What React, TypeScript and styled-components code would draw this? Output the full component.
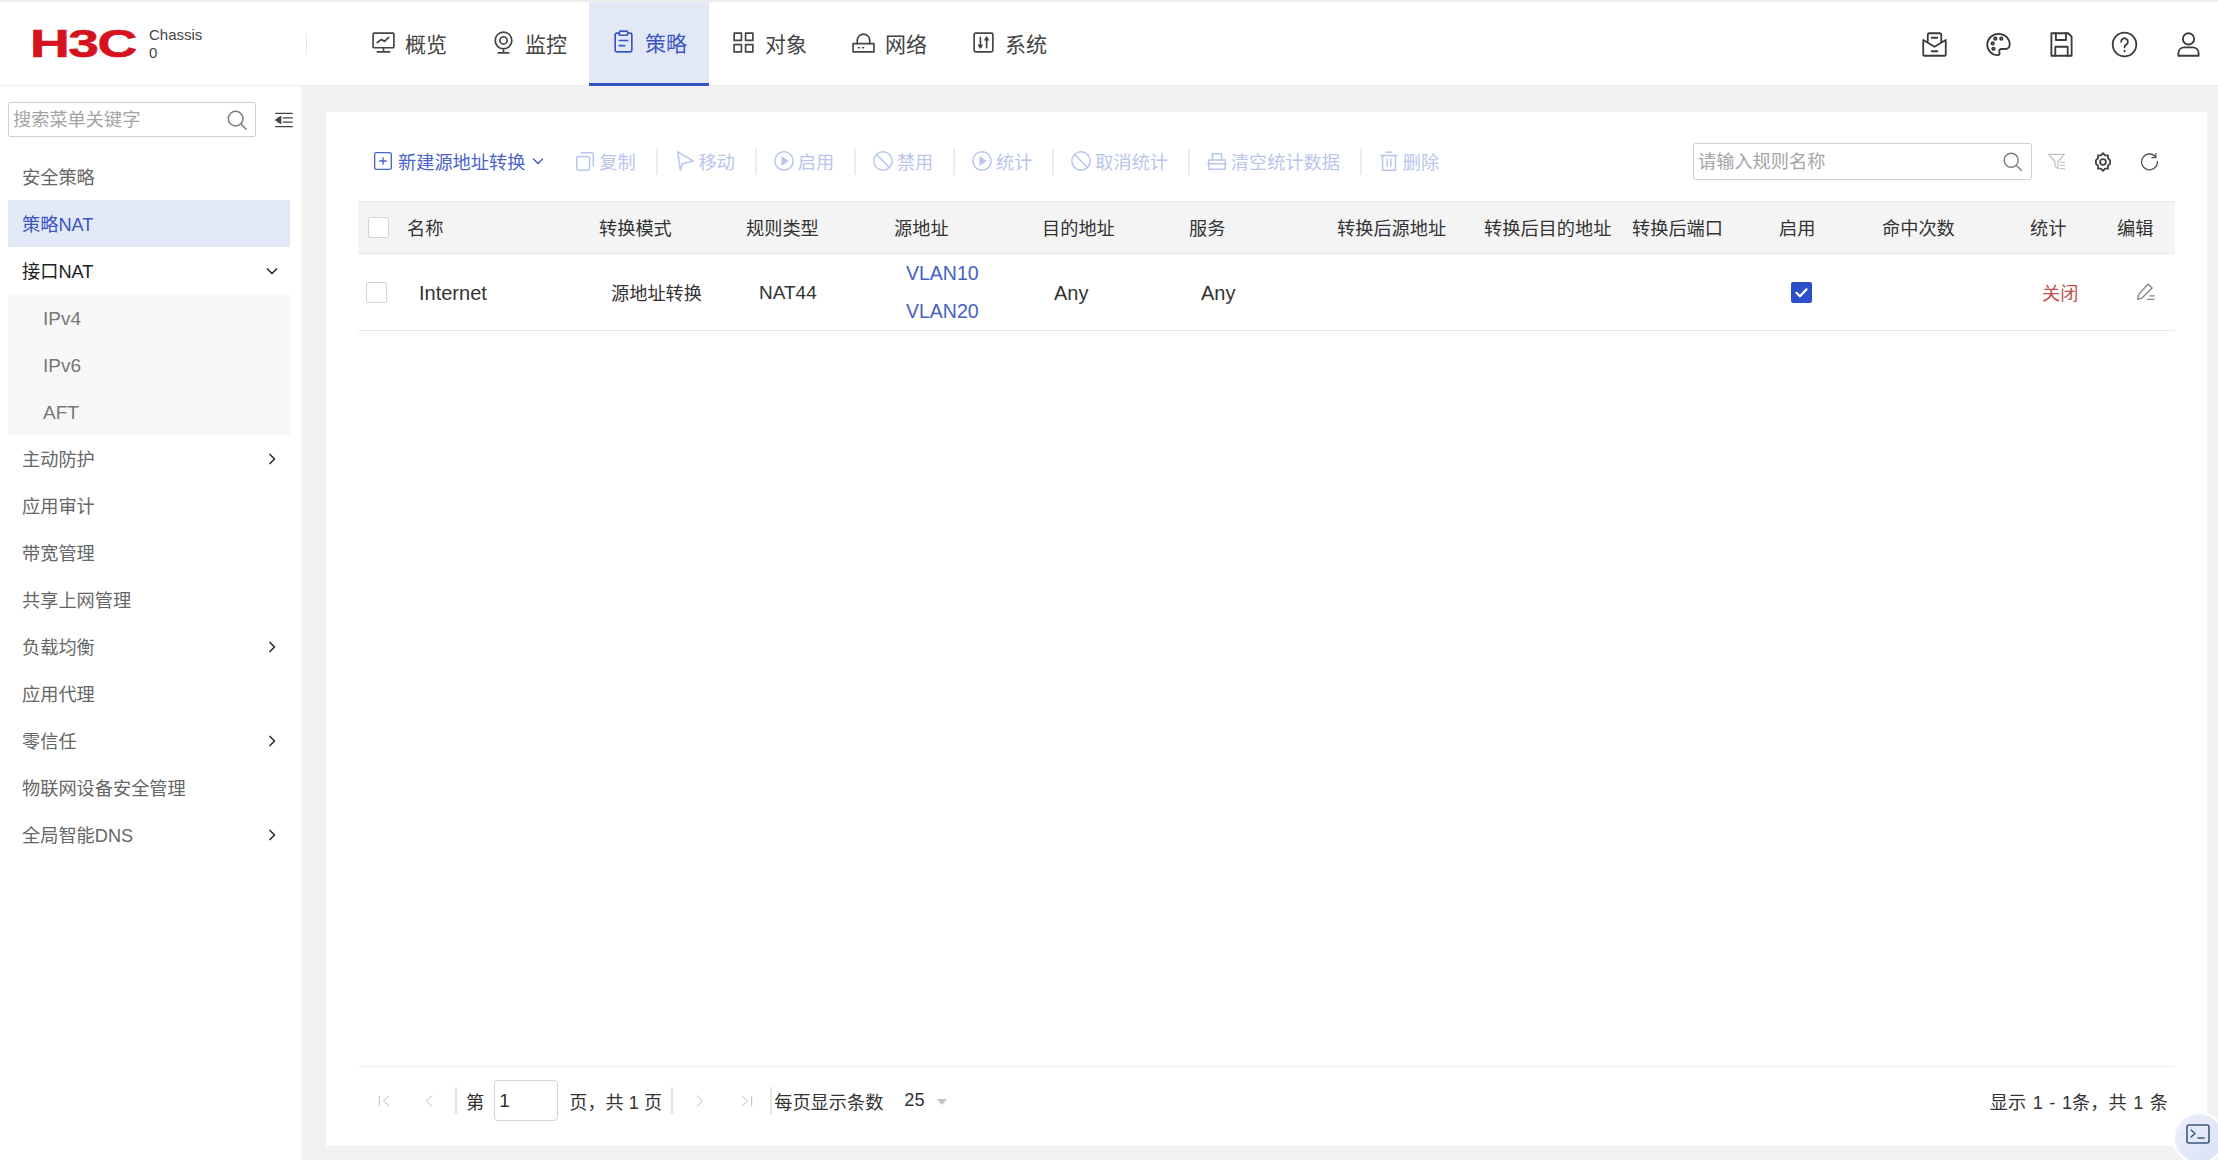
import type { ReactNode } from 'react';
import styled, { createGlobalStyle } from 'styled-components';

const FONT = '"Liberation Sans", "Noto Sans CJK SC", sans-serif';
const COLUMNS = '37px 192px 147px 148px 148px 147px 148px 147px 148px 147px 103px 148px 87px 70px';

const GlobalStyle = createGlobalStyle`
  html, body {
    margin: 0;
    padding: 0;
    background: #f2f2f2;
  }
  * {
    box-sizing: border-box;
  }
`;

function Icon({ size = 20, children }: { size?: number; children: ReactNode }) {
  return (
    <Glyph $size={size} viewBox="0 0 24 24">
      {children}
    </Glyph>
  );
}

const navItems = [
  {
    label: '概览',
    icon: (
      <>
        <rect x="2" y="3" width="20" height="14" rx="1" />
        <path d="M12 17v4M6 21h12M6 12l4-3 3 2 4-4" />
      </>
    ),
  },
  {
    label: '监控',
    icon: (
      <>
        <circle cx="12" cy="10" r="8" />
        <circle cx="12" cy="10" r="3.5" />
        <path d="M12 18v3M7 22h10" />
      </>
    ),
  },
  {
    label: '策略',
    icon: (
      <>
        <path d="M8 4H5.5A1.5 1.5 0 0 0 4 5.5v15A1.5 1.5 0 0 0 5.5 22h13a1.5 1.5 0 0 0 1.500-1.500v-15A1.500 1.500 0 0 0 18.500 4H16" />
        <rect x="8" y="2" width="8" height="4" rx="1" />
        <path d="M8 11h8M8 16h5" />
      </>
    ),
  },
  {
    label: '对象',
    icon: (
      <>
        <rect x="3" y="3" width="7" height="7" />
        <rect x="14" y="3" width="7" height="7" />
        <rect x="3" y="14" width="7" height="7" />
        <rect x="14" y="14" width="7" height="7" />
      </>
    ),
  },
  {
    label: '网络',
    icon: (
      <>
        <path d="M2 13h20v8H2z" />
        <path d="M6 13v-3a6 6 0 0 1 12 0v3" />
        <path d="M7 17h1M11 17h1" />
      </>
    ),
  },
  {
    label: '系统',
    icon: (
      <>
        <rect x="3" y="3" width="18" height="18" rx="1.500" />
        <path d="M9 7v10M15 7v10M7.500 14.500 9 17l1.500-2.500M13.500 9.500 15 7l1.500 2.500" />
      </>
    ),
  },
];

const headerActions = [
  <>
    <path d="M6 9V3.500A1.500 1.500 0 0 1 7.500 2h9A1.500 1.500 0 0 1 18 3.500V9" />
    <path d="M2 8v13a1 1 0 0 0 1 1h18a1 1 0 0 0 1-1V8l-10 6z" />
    <path d="M9.500 6h5M9.500 18h5" />
  </>,
  <>
    <path d="M12 2.500C6.500 2.500 2 6.800 2 12.200c0 5.200 4.300 9.300 9 9.300 2 0 2.300-1.300 1.800-2.500-.6-1.500.2-3 2-3h2.700c2.700 0 4.500-1.700 4.500-4 0-5.400-4.500-9.500-10-9.500z" />
    <circle cx="6.800" cy="11" r="1.100" />
    <circle cx="9.200" cy="6.800" r="1.100" />
    <circle cx="14.500" cy="6.800" r="1.100" />
    <circle cx="7.500" cy="15.800" r="1.100" />
  </>,
  <>
    <path d="M3 2h15l3 3v17H3z" />
    <path d="M7 2v6h9V2M6.500 22v-8h11v8" />
  </>,
  <>
    <circle cx="12" cy="12" r="10.500" />
    <path d="M9 9.500a3 3 0 1 1 4.500 2.600c-1 .6-1.500 1.200-1.500 2.400M12 17.500v.6" />
  </>,
  <>
    <circle cx="12" cy="7" r="5" />
    <path d="M3 22v-2.500c0-3 2.500-5 5.500-5h7c3 0 5.500 2 5.500 5V22z" />
  </>,
];

const sideMenu: { label: string; arrow?: 'right' | 'down'; strong?: boolean; active?: boolean; children?: string[] }[] = [
  { label: '安全策略' },
  { label: '策略NAT', active: true },
  { label: '接口NAT', arrow: 'down', strong: true, children: ['IPv4', 'IPv6', 'AFT'] },
  { label: '主动防护', arrow: 'right' },
  { label: '应用审计' },
  { label: '带宽管理' },
  { label: '共享上网管理' },
  { label: '负载均衡', arrow: 'right' },
  { label: '应用代理' },
  { label: '零信任', arrow: 'right' },
  { label: '物联网设备安全管理' },
  { label: '全局智能DNS', arrow: 'right' },
];

const playIcon = (
  <>
    <circle cx="12" cy="12" r="10" />
    <path d="M10 8l6 4-6 4z" fill="currentColor" />
  </>
);
const banIcon = (
  <>
    <circle cx="12" cy="12" r="10" />
    <path d="M5 5l14 14" />
  </>
);

const toolItems = [
  {
    label: '复制',
    icon: (
      <>
        <rect x="3" y="7" width="14" height="15" rx="2" />
        <path d="M8 3h11a2 2 0 0 1 2 2v12" />
      </>
    ),
  },
  { label: '移动', icon: <path d="M4 2l17 10L9 15l-2 7z" /> },
  { label: '启用', icon: playIcon },
  { label: '禁用', icon: banIcon },
  { label: '统计', icon: playIcon },
  { label: '取消统计', icon: banIcon },
  {
    label: '清空统计数据',
    icon: (
      <>
        <path d="M3 11h18v10H3zM2 15h20" />
        <path d="M7 11V4h10v7" />
      </>
    ),
  },
  {
    label: '删除',
    icon: (
      <>
        <path d="M5 6v16h14V6M3 6h18M9 2.500h6" />
        <path d="M10 10v8M14 10v8" />
      </>
    ),
  },
];

const headers = ['名称', '转换模式', '规则类型', '源地址', '目的地址', '服务', '转换后源地址', '转换后目的地址', '转换后端口', '启用', '命中次数', '统计', '编辑'];

export default function App() {
  return (
    <Page>
      <GlobalStyle />
      <TopBar>
        <Brand>
          <LogoBox>
            <LogoText>H3C</LogoText>
          </LogoBox>
          <Device>
            <span>Chassis</span>
            <span>0</span>
          </Device>
        </Brand>
        <Nav>
          {navItems.map((item) => (
            <NavItem key={item.label} $active={item.label === '策略'}>
              <Icon size={25}>{item.icon}</Icon>
              <NavLabel>{item.label}</NavLabel>
            </NavItem>
          ))}
        </Nav>
        <Actions>
          {headerActions.map((icon, i) => (
            <ActionButton key={i}>
              <Icon size={27}>{icon}</Icon>
            </ActionButton>
          ))}
        </Actions>
      </TopBar>

      <Body>
        <Sidebar>
          <SideSearchRow>
            <SideSearch>
              <SearchInput placeholder="搜索菜单关键字" />
              <SearchGlyph>
                <Icon size={22}>
                  <circle cx="10.500" cy="10.500" r="8" />
                  <path d="M16.500 16.500 22 22" />
                </Icon>
              </SearchGlyph>
            </SideSearch>
            <CollapseButton>
              <Icon size={20}>
                <path d="M2 4h20M11 9.500h11M11 14.500h11M2 20h20" />
                <path d="M8 8v8l-6-4z" fill="currentColor" />
              </Icon>
            </CollapseButton>
          </SideSearchRow>
          <Menu>
            {sideMenu.map((entry) => (
              <div key={entry.label}>
                <MenuRow $active={entry.active} $strong={entry.strong}>
                  {entry.label}
                  {entry.arrow && (
                    <MenuArrow>
                      <Icon size={12}>
                        <path d={entry.arrow === 'down' ? 'M3 8l9 9 9-9' : 'M8 3l9 9-9 9'} />
                      </Icon>
                    </MenuArrow>
                  )}
                </MenuRow>
                {entry.children && (
                  <SubMenu>
                    {entry.children.map((child) => (
                      <SubRow key={child}>{child}</SubRow>
                    ))}
                  </SubMenu>
                )}
              </div>
            ))}
          </Menu>
        </Sidebar>

        <Main>
          <Card>
            <Toolbar>
              <NewButton>
                <Icon size={20}>
                  <rect x="2" y="2" width="20" height="20" rx="2" />
                  <path d="M12 8v8M8 12h8" />
                </Icon>
                新建源地址转换
                <Icon size={12}>
                  <path d="M3 8l9 9 9-9" />
                </Icon>
              </NewButton>
              {toolItems.map((tool, i) => (
                <ToolGroup key={tool.label}>
                  <ToolButton>
                    <Icon size={22}>{tool.icon}</Icon>
                    {tool.label}
                  </ToolButton>
                  {i < toolItems.length - 1 && <ToolSep />}
                </ToolGroup>
              ))}
              <RuleSearch>
                <RuleInput placeholder="请输入规则名称" />
                <SearchGlyph>
                  <Icon size={21}>
                    <circle cx="10.500" cy="10.500" r="8" />
                    <path d="M16.500 16.500 22 22" />
                  </Icon>
                </SearchGlyph>
              </RuleSearch>
              <TableTools>
                <FilterTool>
                  <Icon size={19}>
                    <path d="M2 3h20l-8 9v9l-4-3v-6z" />
                    <path d="M17 13h5M17 17h5M17 21h5" />
                  </Icon>
                </FilterTool>
                <GearTool>
                  <Icon size={20}>
                    <path d="M12 1.500l2.500 2.500h3.500v3.500l2.500 2.500v4l-2.500 2.500V20h-3.500L12 22.500 9.500 20H6v-3.500L3.500 14v-4L6 7.500V4h3.500z" />
                    <circle cx="12" cy="12" r="3.500" />
                  </Icon>
                </GearTool>
                <Icon size={19}>
                  <path d="M20 6.500A10 10 0 1 0 22 12" />
                  <path d="M20 2v5h-5" />
                </Icon>
              </TableTools>
            </Toolbar>

            <TableArea>
              <HeaderRow>
                <CheckCell>
                  <CheckBox />
                </CheckCell>
                {headers.map((title) => (
                  <HeaderCell key={title}>{title}</HeaderCell>
                ))}
              </HeaderRow>
              <DataRow>
                <CheckCell $shift={-2}>
                  <CheckBox />
                </CheckCell>
                <NameCell>Internet</NameCell>
                <DataCell>源地址转换</DataCell>
                <LatinCell>NAT44</LatinCell>
                <LinkCell>
                  <span>VLAN10</span>
                  <span>VLAN20</span>
                </LinkCell>
                <AnyCell>Any</AnyCell>
                <AnyCell>Any</AnyCell>
                <DataCell />
                <DataCell />
                <DataCell />
                <DataCell>
                  <CheckedBox>
                    <Icon size={15}>
                      <path d="M4 12.500l5.500 5.500L20 7" />
                    </Icon>
                  </CheckedBox>
                </DataCell>
                <DataCell />
                <OffCell>关闭</OffCell>
                <EditCell>
                  <Icon size={21}>
                    <path d="M3 21l1.500-6L15 3.500l4.500 4.500L8 19.500z" />
                    <path d="M14 21h8M17 17h5" />
                  </Icon>
                </EditCell>
              </DataRow>
            </TableArea>

            <Pager>
              <PagerIcon $gap={31}>
                <Icon size={14}>
                  <path d="M4 4v16M20 4l-9 8 9 8" />
                </Icon>
              </PagerIcon>
              <PagerIcon $gap={19}>
                <Icon size={14}>
                  <path d="M17 3l-9 9 9 9" />
                </Icon>
              </PagerIcon>
              <PagerSep />
              <PagerText>第</PagerText>
              <PageInput defaultValue="1" />
              <PagerText>页，共 1 页</PagerText>
              <PagerSep />
              <PagerIcon $gap={33} $lead={20}>
                <Icon size={14}>
                  <path d="M7 3l9 9-9 9" />
                </Icon>
              </PagerIcon>
              <PagerIcon $gap={16}>
                <Icon size={14}>
                  <path d="M20 4v16M4 4l9 8-9 8" />
                </Icon>
              </PagerIcon>
              <PagerSep />
              <SizeLabel>每页显示条数</SizeLabel>
              <SizeValue>25</SizeValue>
              <SizeCaret />
              <PagerSummary>显示 1 - 1条，共 1 条</PagerSummary>
            </Pager>
          </Card>
        </Main>
      </Body>

      <ConsoleButton>
        <Icon size={24}>
          <rect x="1" y="3" width="22" height="18" rx="2" />
          <path d="M5 8l4 3.500L5 15M12 16h6" />
        </Icon>
      </ConsoleButton>
    </Page>
  );
}

const Glyph = styled.svg<{ $size: number }>`
  width: ${({ $size }) => $size}px;
  height: ${({ $size }) => $size}px;
  flex: none;
  fill: none;
  stroke: currentColor;
  stroke-width: 1.6;
  stroke-linejoin: round;
  stroke-linecap: round;
`;

const Page = styled.div`
  position: relative;
  width: 2218px;
  height: 1160px;
  display: flex;
  flex-direction: column;
  overflow: hidden;
  border-top: 2px solid #ececec;
  background: #f2f2f2;
  color: #333;
  font-family: ${FONT};
`;

const TopBar = styled.header`
  height: 84px;
  flex: none;
  display: flex;
  align-items: stretch;
  background: #fff;
  border-bottom: 1px solid #ebebeb;
`;

const Brand = styled.div`
  width: 307px;
  flex: none;
  display: flex;
  align-items: center;
  padding-left: 30px;
  position: relative;

  &::after {
    content: '';
    position: absolute;
    right: 0;
    top: 32px;
    height: 20px;
    width: 1px;
    background: #e6e6e6;
  }
`;

const LogoBox = styled.div`
  width: 119px;
  height: 28px;
  flex: none;
  overflow: visible;
`;

const LogoText = styled.span`
  display: inline-block;
  font-family: "Liberation Sans", sans-serif;
  font-weight: 700;
  font-size: 38px;
  line-height: 28px;
  letter-spacing: -1px;
  color: #d6121f;
  -webkit-text-stroke: 0.6px #d6121f;
  transform: scaleX(1.45);
  transform-origin: left center;
`;

const Device = styled.div`
  display: flex;
  flex-direction: column;
  font-size: 15px;
  line-height: 18px;
  color: #444;
`;

const Nav = styled.nav`
  display: flex;
  padding-left: 42px;
`;

const NavItem = styled.div<{ $active?: boolean }>`
  width: 120px;
  display: flex;
  align-items: center;
  justify-content: center;
  gap: 9px;
  font-size: 21px;
  margin-bottom: -1px;
  color: ${({ $active }) => ($active ? '#3a56c5' : '#444')};
  background: ${({ $active }) => ($active ? '#e3e8f7' : 'transparent')};
  border-bottom: 3px solid ${({ $active }) => ($active ? '#3353c4' : 'transparent')};
  padding-top: ${({ $active }) => ($active ? '0' : '3px')};
  padding-bottom: 3px;
`;

const NavLabel = styled.span`
  padding-top: 1px;
`;

const Actions = styled.div`
  margin-left: auto;
  display: flex;
  align-items: center;
  gap: 36.300px;
  padding: 2px 16.500px 0 0;
  color: #3a3a3a;
`;

const ActionButton = styled.div`
  display: flex;
`;

const Body = styled.div`
  flex: 1;
  min-height: 0;
  display: flex;
`;

const Sidebar = styled.aside`
  width: 301px;
  flex: none;
  background: #fff;
  padding: 16px 11px 0 8px;
`;

const SideSearchRow = styled.div`
  display: flex;
  align-items: center;
  justify-content: space-between;
`;

const SideSearch = styled.div`
  width: 248px;
  height: 35px;
  display: flex;
  align-items: center;
  padding: 0 7px 0 4px;
  border: 1px solid #cfcfcf;
  border-radius: 2px;
`;

const SearchInput = styled.input`
  flex: 1;
  min-width: 0;
  border: none;
  outline: none;
  padding: 2px 0 0;
  background: transparent;
  font-family: ${FONT};
  font-size: 18.200px;
  color: #333;

  &::placeholder {
    color: #a4a4a4;
  }
`;

const SearchGlyph = styled.span`
  display: flex;
  color: #7a7a7a;
`;

const CollapseButton = styled.div`
  display: flex;
  margin-right: -4px;
  color: #444;
`;

const Menu = styled.div`
  margin-top: 16px;
`;

const MenuRow = styled.div<{ $active?: boolean; $strong?: boolean }>`
  height: 47px;
  display: flex;
  align-items: center;
  justify-content: space-between;
  padding: 0 12px 2px 14px;
  font-size: 18.200px;
  background: ${({ $active }) => ($active ? '#e3e8f7' : 'transparent')};
  color: ${({ $active, $strong }) => {
    if ($active) return '#3a56c5';
    return $strong ? '#222' : '#666';
  }};
`;

const MenuArrow = styled.span`
  display: flex;
  margin-top: 3px;
  color: #333;

  svg {
    stroke-width: 3.4;
  }
`;

const SubMenu = styled.div`
  background: #f7f7f7;
`;

const SubRow = styled.div`
  height: 47px;
  display: flex;
  align-items: center;
  padding: 2px 0 0 35px;
  font-size: 19px;
  color: #777;
`;

const Main = styled.main`
  flex: 1;
  min-width: 0;
  padding: 26px 11px 14px 25px;
`;

const Card = styled.section`
  height: 100%;
  display: flex;
  flex-direction: column;
  background: #fff;
  padding: 31px 32px 0;
`;

const Toolbar = styled.div`
  height: 37px;
  flex: none;
  display: flex;
  align-items: center;
  padding-left: 15px;
  font-size: 18.200px;
`;

const NewButton = styled.div`
  display: flex;
  align-items: center;
  gap: 5px;
  margin-right: 30px;
  padding-bottom: 2px;
  color: #4a63c9;

  svg:last-child {
    margin-left: 2px;
    stroke-width: 3;
  }
`;

const ToolGroup = styled.div`
  display: flex;
  align-items: center;
`;

const ToolButton = styled.div`
  display: flex;
  align-items: center;
  gap: 3px;
  padding-bottom: 2px;
  color: #b9c5ec;
`;

const ToolSep = styled.span`
  width: 2px;
  height: 27px;
  margin: 0 15.800px 0 20px;
  background: #ececec;
`;

const RuleSearch = styled.div`
  margin-left: auto;
  width: 339px;
  height: 37px;
  display: flex;
  align-items: center;
  padding: 0 8px 0 4px;
  border: 1px solid #cfcfcf;
  border-radius: 3px;
`;

const RuleInput = styled(SearchInput)``;

const TableTools = styled.div`
  display: flex;
  align-items: center;
  gap: 27px;
  margin-left: 15px;
  padding-right: 16px;
  color: #555;
`;

const FilterTool = styled.span`
  display: flex;
  color: #c4c4c4;
`;

const GearTool = styled.span`
  display: flex;
  color: #444;

  svg {
    stroke-width: 2.2;
  }
`;

const TableArea = styled.div`
  flex: 1;
  min-height: 0;
  margin-top: 21px;
`;

const HeaderRow = styled.div`
  height: 53px;
  display: grid;
  grid-template-columns: ${COLUMNS};
  align-items: center;
  background: #f4f4f4;
  border-top: 1px solid #ececec;
  border-bottom: 1px solid #e8e8e8;
`;

const DataRow = styled.div`
  height: 77px;
  display: grid;
  grid-template-columns: ${COLUMNS};
  align-items: center;
  border-bottom: 1px solid #e8e8e8;
`;

const CheckCell = styled.div<{ $shift?: number }>`
  display: flex;
  padding-left: ${({ $shift = 0 }) => 10 + $shift}px;
`;

const CheckBox = styled.span`
  display: block;
  width: 21px;
  height: 21px;
  background: #fff;
  border: 1px solid #d4d4d4;
  border-radius: 2px;
`;

const CheckedBox = styled.span`
  width: 21px;
  height: 21px;
  display: flex;
  align-items: center;
  justify-content: center;
  background: #2d4fc9;
  border-radius: 2px;
  color: #fff;

  svg {
    stroke-width: 3.5;
  }
`;

const HeaderCell = styled.div`
  padding: 0 0 2px 12px;
  font-size: 18.200px;
  color: #333;
  white-space: nowrap;
`;

const DataCell = styled.div`
  padding-left: 24px;
  font-size: 18.200px;
  color: #333;
  white-space: nowrap;
`;

const NameCell = styled(DataCell)`
  font-size: 20px;
  padding-top: 2px;
`;

const LatinCell = styled(DataCell)`
  font-size: 19px;
  padding: 2px 0 0 25px;
`;

const AnyCell = styled(DataCell)`
  font-size: 20px;
  padding-top: 2px;
`;

const LinkCell = styled(DataCell)`
  display: flex;
  flex-direction: column;
  gap: 16px;
  font-size: 19.500px;
  line-height: 22px;
  color: #4560c6;
`;

const OffCell = styled(DataCell)`
  color: #c4504d;
`;

const EditCell = styled(DataCell)`
  display: flex;
  padding: 0 0 2px 30px;
  color: #888;
`;

const Pager = styled.div`
  height: 80px;
  flex: none;
  display: flex;
  align-items: center;
  padding: 0 7px 12px 19px;
  border-top: 1px solid #ebebeb;
  font-size: 18.200px;
  color: #333;
`;

const PagerIcon = styled.span<{ $gap: number; $lead?: number }>`
  display: flex;
  margin-left: ${({ $lead = 0 }) => $lead}px;
  margin-right: ${({ $gap }) => $gap}px;
  color: #b8b8b8;
`;

const PagerSep = styled.span`
  width: 2px;
  height: 27px;
  background: #e6e6e6;
`;

const PagerText = styled.span`
  margin: 0 9px;
  white-space: pre;
`;

const PageInput = styled.input`
  width: 64px;
  height: 41px;
  padding: 0 0 0 4px;
  margin: 0 2px 0 1px;
  border: 1px solid #d4d4d4;
  border-radius: 4px;
  outline: none;
  font-family: ${FONT};
  font-size: 19px;
  color: #333;
`;

const SizeLabel = styled.span`
  margin-left: 2px;
`;

const SizeValue = styled.span`
  margin-left: 21px;
`;

const SizeCaret = styled.span`
  width: 0;
  height: 0;
  margin: 2px 0 0 12px;
  border-left: 5px solid transparent;
  border-right: 5px solid transparent;
  border-top: 6px solid #c4c4c4;
`;

const PagerSummary = styled.span`
  margin-left: auto;
  word-spacing: 1.500px;
`;

const ConsoleButton = styled.div`
  position: absolute;
  left: 2173px;
  top: 1110px;
  width: 52px;
  height: 52px;
  display: flex;
  align-items: center;
  justify-content: center;
  padding: 0 2px 8px 0;
  border: 2px solid #fff;
  border-radius: 50%;
  background: linear-gradient(135deg, #eef1fc, #d9dff6);
  color: #3c5a78;
`;
